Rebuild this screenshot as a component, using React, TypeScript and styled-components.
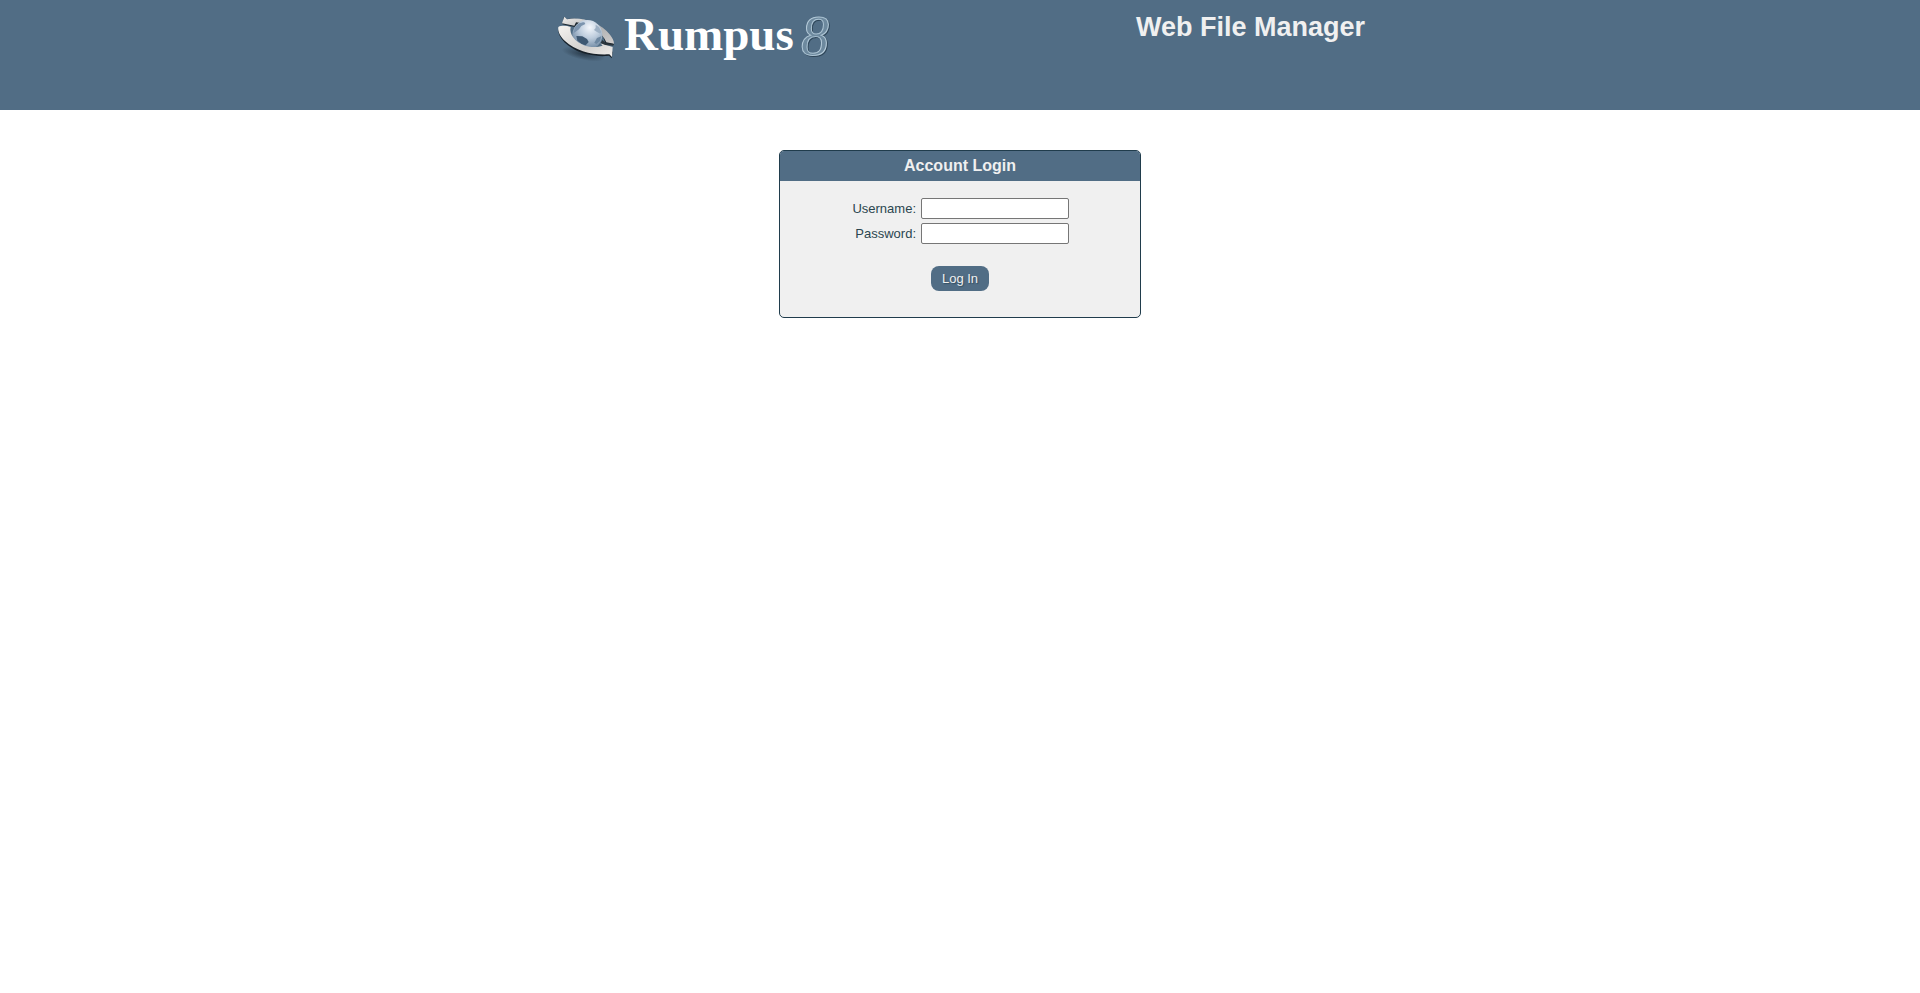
import React, { useId } from "react";
import styled, { createGlobalStyle } from "styled-components";

const slate = "#516d85";
const ink = "#2b464f";
const outline = "#203c4c";

const GlobalStyle = createGlobalStyle`
  body {
    margin: 0;
    background: #ffffff;
    color: ${ink};
    font-family: "Liberation Sans", Arial, Helvetica, sans-serif;
    font-size: 13px;
  }
`;

const Banner = styled.header`
  background: ${slate};
`;

const BannerInner = styled.div`
  display: flex;
  justify-content: space-between;
  align-items: flex-start;
  width: 100%;
  max-width: 810px;
  min-height: 110px;
  margin: 0 auto;
`;

const LogoArt = styled.svg`
  display: block;
  flex: none;
`;

const BannerTitle = styled.h1`
  margin: 0;
  padding-top: 11px;
  color: #f0f0f0;
  font-size: 27px;
  line-height: 32px;
  font-weight: bold;
`;

const Main = styled.main`
  display: flex;
  justify-content: center;
  padding-top: 40px;
`;

const Panel = styled.form`
  width: 360px;
  overflow: hidden;
  border: 1px solid ${outline};
  border-radius: 5px;
  background: #f0f0f0;
`;

const PanelTitle = styled.h2`
  margin: 0;
  background: ${slate};
  color: #f0f0f0;
  font-size: 16px;
  line-height: 30px;
  text-align: center;
`;

const Fields = styled.div`
  display: grid;
  grid-template-columns: 65px 148px;
  justify-content: center;
  align-items: center;
  gap: 4px 5px;
  padding-top: 17px;
`;

const FieldLabel = styled.label`
  text-align: right;
`;

const FieldInput = styled.input`
  box-sizing: border-box;
  width: 100%;
  height: 21px;
  padding: 1px 2px;
  border: 1px solid #767676;
  border-radius: 2px;
  background: #ffffff;
  font: inherit;
`;

const Actions = styled.div`
  display: flex;
  justify-content: center;
  padding: 22px 0 26px;
`;

const SubmitButton = styled.button`
  height: 25px;
  width: 58px;
  padding: 0;
  border: 0;
  border-radius: 8px;
  background: ${slate};
  color: #f0f0f0;
  font: inherit;
  text-shadow: 1px 1px 1px rgba(32, 60, 76, 0.6);
  cursor: pointer;
`;

function Logo() {
  return (
    <LogoArt width="280" height="80" viewBox="0 0 280 80" role="img" aria-label="Rumpus 8">
      <defs>
        <radialGradient id="globe" cx="0.58" cy="0.25" r="0.8">
          <stop offset="0" stopColor="#f4f7fc" />
          <stop offset="0.45" stopColor="#bccbdc" />
          <stop offset="1" stopColor="#5b7793" />
        </radialGradient>
        <linearGradient id="metal" x1="0" y1="0" x2="1" y2="1">
          <stop offset="0" stopColor="#f5f3f0" />
          <stop offset="0.6" stopColor="#d2d0ce" />
          <stop offset="1" stopColor="#f0eeec" />
        </linearGradient>
        <linearGradient id="metalBack" x1="0" y1="0" x2="1" y2="1">
          <stop offset="0" stopColor="#eeecea" />
          <stop offset="0.55" stopColor="#aeb0b2" />
          <stop offset="1" stopColor="#cfcccb" />
        </linearGradient>
        <radialGradient id="shade">
          <stop offset="0" stopColor="#22313f" stopOpacity="0.8" />
          <stop offset="1" stopColor="#22313f" stopOpacity="0" />
        </radialGradient>
        <linearGradient id="glass" x1="0" y1="0" x2="1" y2="1">
          <stop offset="0" stopColor="#d3e4ef" />
          <stop offset="0.5" stopColor="#a3bccd" />
          <stop offset="1" stopColor="#cfe0eb" />
        </linearGradient>
      </defs>
      <svg x="-5" y="8" width="80" height="60" viewBox="0 0 240 180">
        <ellipse cx="100" cy="138" rx="66" ry="18" fill="url(#shade)" transform="rotate(12 100 138)" />
        <path d="M37 49 L74 57 L82 48 L110 42 L160 88 L166 107 L192 112 L188 101 C178 76 148 48 108 38 C88 33 66 31 51 34 L42 26 Z" fill="#1c262e" />
        <path d="M36 46 L43 26 L51 34 C94 25 151 44 180 80 C188 90 192 99 192 107 L169 103 C156 72 119 46 78 43 L73 53 Z" fill="url(#metalBack)" />
        <circle cx="112" cy="81" r="45" fill="url(#globe)" />
        <path d="M74 61 C79 49 91 43 103 43 L106 48 L94 54 L87 64 L76 72 L70 76 Z" fill="#7c94ae" />
        <path d="M79 84 L97 85 L111 93 L116 102 L107 112 L96 109 L82 98 Z" fill="#3e5872" />
        <path d="M137 50 L147 57 L154 71 L151 77 L141 72 L132 66 L137 60 Z" fill="#9db0c4" />
        <path d="M141 90 L154 85 L150 99 L139 108 L133 104 Z" fill="#6d87a1" />
        <path d="M25 64 C23 94 64 128 112 139 C136 144 157 146 177 143 L185 151 L188 132 L183 127 C148 131 104 128 72 110 L65 106 Z" fill="#17212a" />
        <path d="M25 57 C35 52 49 53 62 57 C57 78 74 102 105 113 C124 119 143 118 158 113 L151 106 L188 117 L186 147 L178 139 C129 142 78 130 45 99 C29 84 23 69 25 57 Z" fill="url(#metal)" />
        <path d="M152 105 L157 96 L168 106 L190 108 L189 113 L166 111 Z" fill="#2a343c" />
      </svg>
      <text x="69" y="50" fill="#ffffff" fontFamily='"Liberation Serif", "Times New Roman", serif' fontWeight="bold" fontSize="47">
        Rumpus
      </text>
      <g fontFamily='"Liberation Serif", "Times New Roman", serif' fontStyle="italic" fontSize="56">
        <text x="247" y="56" fill="none" stroke="#2e4557" strokeWidth="1">8</text>
        <text x="246" y="55" fill="#6d899e" stroke="url(#glass)" strokeWidth="1">8</text>
      </g>
    </LogoArt>
  );
}

type FieldProps = { label: string; type: string; name: string };

function Field({ label, type, name }: FieldProps) {
  const id = useId();
  return (
    <>
      <FieldLabel htmlFor={id}>{label}</FieldLabel>
      <FieldInput id={id} type={type} name={name} />
    </>
  );
}

export default function App() {
  return (
    <>
      <GlobalStyle />
      <Banner>
        <BannerInner>
          <Logo />
          <BannerTitle>Web File Manager</BannerTitle>
        </BannerInner>
      </Banner>
      <Main>
        <Panel onSubmit={(event: React.FormEvent) => event.preventDefault()}>
          <PanelTitle>Account Login</PanelTitle>
          <Fields>
            <Field label="Username:" type="text" name="username" />
            <Field label="Password:" type="password" name="password" />
          </Fields>
          <Actions>
            <SubmitButton type="submit">Log In</SubmitButton>
          </Actions>
        </Panel>
      </Main>
    </>
  );
}
